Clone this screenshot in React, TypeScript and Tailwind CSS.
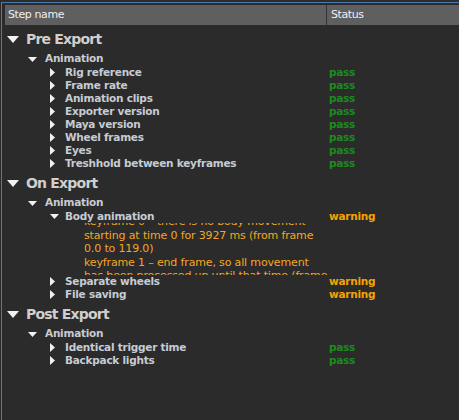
import React from 'react';

type Leaf = { name: string; status: 'pass' | 'warning'; open?: boolean; message?: string[] };
type Group = { title: string; section: string; items: Leaf[] };

const groups: Group[] = [
  {
    title: 'Pre Export',
    section: 'Animation',
    items: [
      { name: 'Rig reference', status: 'pass' },
      { name: 'Frame rate', status: 'pass' },
      { name: 'Animation clips', status: 'pass' },
      { name: 'Exporter version', status: 'pass' },
      { name: 'Maya version', status: 'pass' },
      { name: 'Wheel frames', status: 'pass' },
      { name: 'Eyes', status: 'pass' },
      { name: 'Treshhold between keyframes', status: 'pass' },
    ],
  },
  {
    title: 'On Export',
    section: 'Animation',
    items: [
      {
        name: 'Body animation',
        status: 'warning',
        open: true,
        message: [
          'keyframe 0 – there is no body movement',
          'starting at time 0 for 3927 ms (from frame',
          '0.0 to 119.0)',
          'keyframe 1 – end frame, so all movement',
          'has been processed up until that time (frame',
        ],
      },
      { name: 'Separate wheels', status: 'warning' },
      { name: 'File saving', status: 'warning' },
    ],
  },
  {
    title: 'Post Export',
    section: 'Animation',
    items: [
      { name: 'Identical trigger time', status: 'pass' },
      { name: 'Backpack lights', status: 'pass' },
    ],
  },
];

function Down({ w, h }: { w: number; h: number }) {
  return (
    <svg width={w} height={h} viewBox={`0 0 ${w} ${h}`} className="shrink-0">
      <polygon points={`0,0 ${w},0 ${w / 2},${h}`} fill="#f2f2f2" />
    </svg>
  );
}

function Right() {
  return (
    <svg width={5} height={9} viewBox="0 0 5 9" className="shrink-0">
      <polygon points="0,0 5,4.5 0,9" fill="#f2f2f2" />
    </svg>
  );
}

function StatusText({ s }: { s: Leaf['status'] }) {
  return s === 'pass' ? (
    <span className="font-bold text-[#1d8a1d]">pass</span>
  ) : (
    <span className="font-bold text-[#f5a300]">warning</span>
  );
}

export default function App() {
  return (
    <div
      className="w-[459px] h-[420px] overflow-hidden bg-[#2b2b2b] pt-[2px] pl-[1px]"
      style={{ fontFamily: '"DejaVu Sans", sans-serif' }}
    >
      <div className="h-full border-t border-l border-[#4d7ca9] pt-[2px] pl-[3px]">
        <div className="flex h-[20px] bg-[#5f5f5f] text-[11px] tracking-[-0.4px] text-[#eef0f4] leading-[20px]">
          <div className="w-[322px] pl-[3px] border-r border-[#333]">Step name</div>
          <div className="pl-[4px]">Status</div>
        </div>

        <div className="pt-[1px]">
          {groups.map((g) => (
            <div key={g.title}>
              <div className="flex items-center h-[24px] pt-[2px]">
                <div className="w-[21px] pl-[2px] flex items-center">
                  <Down w={12} h={7} />
                </div>
                <span className="text-[14px] tracking-[-0.8px] font-bold text-[#cfcfcf]">{g.title}</span>
              </div>
              <div className="flex items-center h-[16px] pt-[2px] pl-[23px]">
                <div className="w-[17px] flex items-center">
                  <Down w={9} h={5} />
                </div>
                <span className="text-[10.5px] tracking-[-0.25px] font-bold text-[#c6cbd4]">{g.section}</span>
              </div>
              {g.items.map((it) => (
                <div key={it.name}>
                  <div className="flex items-center h-[13px] text-[10.5px] tracking-[-0.25px] font-bold">
                    <div className="w-[322px] flex items-center pl-[45px]">
                      <div className="w-[15px] flex items-center">
                        {it.open ? <Down w={9} h={5} /> : <Right />}
                      </div>
                      <span className="text-[#c6cbd4]">{it.name}</span>
                    </div>
                    <div className="pl-[2px]">
                      <StatusText s={it.status} />
                    </div>
                  </div>
                  {it.message && (
                    <div className="h-[52px] overflow-hidden pl-[79px]">
                      <div className="-mt-[8px] text-[11px] tracking-[-0.15px] leading-[13.5px] text-[#f5a623]">
                        {it.message.map((m) => (
                          <div key={m} className="whitespace-nowrap">{m}</div>
                        ))}
                      </div>
                    </div>
                  )}
                </div>
              ))}
            </div>
          ))}
        </div>
      </div>
    </div>
  );
}
